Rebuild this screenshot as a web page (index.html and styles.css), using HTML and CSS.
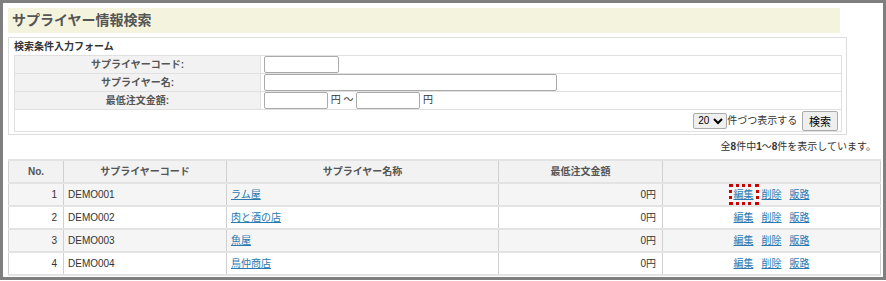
FILE: index.html
```html
<!DOCTYPE html>
<html lang="ja">
<head>
  <meta charset="UTF-8">
  <title>サプライヤー情報検索</title>
  <link rel="stylesheet" href="styles.css">
</head>
<body>
  <div class="frame">
    <h1 class="page-title">サプライヤー情報検索</h1>

    <!-- 検索フォーム -->
    <div class="search-box">
      <h2>検索条件入力フォーム</h2>
      <table class="search-form">
        <tr>
          <th>サプライヤーコード:</th>
          <td><input type="text" class="w-code"></td>
        </tr>
        <tr>
          <th>サプライヤー名:</th>
          <td><input type="text" class="w-name"></td>
        </tr>
        <tr>
          <th>最低注文金額:</th>
          <td><input type="text" class="w-price"> 円 ～ <input type="text" class="w-price"> 円</td>
        </tr>
        <tr>
          <td colspan="2" class="actions">
            <select class="per-page"><option>20</option></select>件づつ表示する
            <button type="button">検索</button>
          </td>
        </tr>
      </table>
    </div>

    <p class="count">全<b>8</b>件中<b>1</b>～<b>8</b>件を表示しています。</p>

    <!-- 検索結果 -->
    <table class="list">
      <tr>
        <th class="c-no">No.</th>
        <th class="c-code">サプライヤーコード</th>
        <th class="c-name">サプライヤー名称</th>
        <th class="c-price">最低注文金額</th>
        <th class="c-ops"></th>
      </tr>
      <tr class="odd">
        <td class="num">1</td>
        <td>DEMO001</td>
        <td><a href="#">ラム屋</a></td>
        <td class="num">0円</td>
        <td class="ops"><a href="#" class="mark">編集</a><a href="#">削除</a><a href="#">販路</a></td>
      </tr>
      <tr>
        <td class="num">2</td>
        <td>DEMO002</td>
        <td><a href="#">肉と酒の店</a></td>
        <td class="num">0円</td>
        <td class="ops"><a href="#">編集</a><a href="#">削除</a><a href="#">販路</a></td>
      </tr>
      <tr class="odd">
        <td class="num">3</td>
        <td>DEMO003</td>
        <td><a href="#">魚屋</a></td>
        <td class="num">0円</td>
        <td class="ops"><a href="#">編集</a><a href="#">削除</a><a href="#">販路</a></td>
      </tr>
      <tr>
        <td class="num">4</td>
        <td>DEMO004</td>
        <td><a href="#">鳥仲商店</a></td>
        <td class="num">0円</td>
        <td class="ops"><a href="#">編集</a><a href="#">削除</a><a href="#">販路</a></td>
      </tr>
    </table>
  </div>
</body>
</html>
```

FILE: styles.css
```css
/* 基本 */
* {
  box-sizing: border-box;
  margin: 0;
  padding: 0;
}
body {
  font-family: "Liberation Sans", "Noto Sans CJK JP", sans-serif;
  font-size: 10px;
  line-height: 14px;
  color: #333;
  background: #fff;
}
.frame {
  width: 886px;
  height: 280px;
  border: 3px solid #7f7f7f;
  padding: 5px 2px 0 5px;
  overflow: hidden;
}
.page-title {
  width: 832px;
  height: 25px;
  line-height: 25px;
  padding-left: 4px;
  background: #f4f4de;
  color: #555;
  font-size: 14px;
  font-weight: bold;
}
.search-box {
  width: 839px;
  margin-top: 4px;
  border: 1px solid #ddd;
  padding: 2px 4px 2px 5px;
}
.search-box h2 {
  font-size: 10px;
  font-weight: bold;
  line-height: 14px;
  margin-bottom: 1px;
}
.search-form {
  width: 100%;
  border-collapse: collapse;
}
.search-form th,
.search-form td {
  border: 1px solid #e0e0e0;
  height: 18px;
  padding: 0 3px;
}
.search-form th {
  width: 246px;
  background: #f2f2f2;
  color: #555;
  text-align: center;
}
input {
  height: 17px;
  border: 1px solid #aaa;
  border-radius: 2px;
  vertical-align: middle;
}
.w-code { width: 75px; }
.w-name { width: 293px; }
.w-price { width: 64px; }
.search-form .actions {
  height: 22px;
  text-align: right;
  padding-right: 3px;
}
.per-page {
  width: 34px;
  height: 16px;
  font-size: 10px;
  border: 1px solid #aaa;
  border-radius: 2px;
  vertical-align: middle;
}
button {
  height: 20px;
  padding: 0 6px;
  margin-left: 2px;
  font-family: inherit;
  font-size: 11px;
  background: #efefef;
  border: 1px solid #aaa;
  border-radius: 2px;
  vertical-align: middle;
}
.count {
  text-align: right;
  padding-right: 5px;
  margin-top: 5px;
  line-height: 14px;
}
/* 一覧 */
.list {
  width: 873px;
  margin-top: 5px;
  border-collapse: collapse;
}
.list th,
.list td {
  height: 23px;
  border-top: 2px solid #e3e3e3;
  border-bottom: 2px solid #e3e3e3;
  border-left: 1px solid #d0d0d0;
  border-right: 1px solid #d0d0d0;
  padding: 0 4px;
}
.list th {
  background: #f2f2f2;
  color: #555;
  font-weight: bold;
  text-align: center;
}
.list .odd td {
  background: #f5f5f5;
}
.c-no { width: 55px; }
.c-code { width: 163px; }
.c-name { width: 272px; }
.c-price { width: 164px; }
.list td.num {
  text-align: right;
  padding-right: 6px;
}
.list td.ops {
  text-align: center;
}
a {
  color: #2a79b0;
}
.ops a {
  margin: 0 4px;
}
.mark {
  position: relative;
}
.mark::after {
  content: "";
  position: absolute;
  left: -5px;
  right: -5px;
  top: -5px;
  bottom: -5px;
  border: 3px dotted #c00;
}
```
